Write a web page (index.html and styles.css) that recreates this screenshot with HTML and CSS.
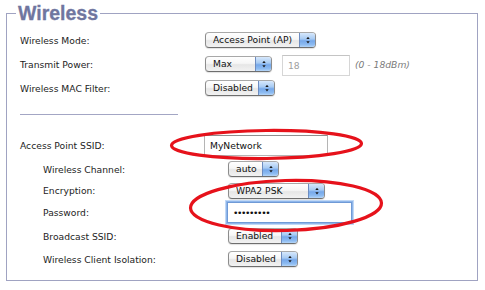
FILE: index.html
```
<!DOCTYPE html>
<html>
<head>
<meta charset="utf-8">
<title>Wireless</title>
<link rel="stylesheet" href="styles.css">
</head>
<body>
<form class="page">
  <fieldset class="panel">
    <legend class="panel-title">Wireless</legend>

    <div class="grid grid-main">
      <label class="lbl">Wireless Mode:</label>
      <div class="ctl">
        <span class="sel w-ap"><select><option>Access Point (AP)</option></select><span class="sel-btn"><svg viewBox="0 0 14 14" width="14" height="14"><polygon points="5.3,6 7,3.8 8.7,6"/><polygon points="5.3,8.3 7,10.5 8.7,8.3"/></svg></span></span>
      </div>

      <label class="lbl">Transmit Power:</label>
      <div class="ctl">
        <span class="sel w-max"><select><option>Max</option></select><span class="sel-btn"><svg viewBox="0 0 14 14" width="14" height="14"><polygon points="5.3,6 7,3.8 8.7,6"/><polygon points="5.3,8.3 7,10.5 8.7,8.3"/></svg></span></span>
        <input class="txt txt-power" type="text" value="18" disabled>
        <span class="hint">(0 - 18dBm)</span>
      </div>

      <label class="lbl">Wireless MAC Filter:</label>
      <div class="ctl">
        <span class="sel w-dis"><select><option>Disabled</option></select><span class="sel-btn"><svg viewBox="0 0 14 14" width="14" height="14"><polygon points="5.3,6 7,3.8 8.7,6"/><polygon points="5.3,8.3 7,10.5 8.7,8.3"/></svg></span></span>
      </div>
    </div>

    <hr class="divider">

    <div class="grid grid-ssid">
      <label class="lbl">Access Point SSID:</label>
      <div class="ctl">
        <input class="txt txt-ssid" type="text" value="MyNetwork">
      </div>
    </div>

    <div class="grid grid-sub">
      <label class="lbl">Wireless Channel:</label>
      <div class="ctl">
        <span class="sel w-auto"><select><option>auto</option></select><span class="sel-btn"><svg viewBox="0 0 14 14" width="14" height="14"><polygon points="5.3,6 7,3.8 8.7,6"/><polygon points="5.3,8.3 7,10.5 8.7,8.3"/></svg></span></span>
      </div>

      <label class="lbl">Encryption:</label>
      <div class="ctl">
        <span class="sel w-wpa"><select><option>WPA2 PSK</option></select><span class="sel-btn"><svg viewBox="0 0 14 14" width="14" height="14"><polygon points="5.3,6 7,3.8 8.7,6"/><polygon points="5.3,8.3 7,10.5 8.7,8.3"/></svg></span></span>
      </div>

      <label class="lbl">Password:</label>
      <div class="ctl">
        <input class="txt txt-pwd" type="password" value="password1">
      </div>

      <label class="lbl">Broadcast SSID:</label>
      <div class="ctl">
        <span class="sel w-en"><select><option>Enabled</option></select><span class="sel-btn"><svg viewBox="0 0 14 14" width="14" height="14"><polygon points="5.3,6 7,3.8 8.7,6"/><polygon points="5.3,8.3 7,10.5 8.7,8.3"/></svg></span></span>
      </div>

      <label class="lbl">Wireless Client Isolation:</label>
      <div class="ctl">
        <span class="sel w-en"><select><option>Disabled</option></select><span class="sel-btn"><svg viewBox="0 0 14 14" width="14" height="14"><polygon points="5.3,6 7,3.8 8.7,6"/><polygon points="5.3,8.3 7,10.5 8.7,8.3"/></svg></span></span>
      </div>
    </div>
  </fieldset>

  <svg class="marks" viewBox="0 0 485 290" width="485" height="290" aria-hidden="true">
    <ellipse cx="266.5" cy="144.5" rx="95" ry="14" transform="rotate(-0.6 266.5 144.5)"/>
    <ellipse cx="286" cy="205.5" rx="95.5" ry="25" transform="rotate(-1.5 286 205.5)"/>
  </svg>
</form>
</body>
</html>
```
FILE: styles.css
```
* { box-sizing: border-box; }

html, body {
  margin: 0;
  padding: 0;
  background: #ffffff;
}

.page {
  position: relative;
  width: 485px;
  height: 290px;
  padding: 3px 0 0 6px;
  font-family: "DejaVu Sans", Verdana, sans-serif;
  font-size: 9.2px;
  color: #1d1d1d;
}

.panel {
  width: 472px;
  margin: 0;
  padding: 5px 0 10px 13px;
  border: 1px solid #a0a3c2;
}

.panel-title {
  margin-left: -4px;
  padding: 0 2px;
  font-family: "Liberation Sans", Arial, sans-serif;
  font-weight: bold;
  font-size: 19.5px;
  line-height: 20px;
  color: #70769f;
  -webkit-text-stroke: 0.3px #70769f;
}

.grid {
  display: grid;
  grid-template-columns: 185px 1fr;
  align-items: center;
}

.grid-main {
  grid-auto-rows: 24px;
}

.grid-ssid {
  grid-template-rows: 22px;
  margin-top: 19px;
}

.grid-sub {
  padding-left: 23px;
  margin-top: 2px;
  grid-template-rows: 22px 21px 23px 24px 22px;
}

.lbl {
  white-space: nowrap;
}

.ctl {
  display: flex;
  align-items: center;
}

.divider {
  width: 158px;
  margin: 14px 0 0 0;
  border: 0;
  border-top: 1px solid #a3a6c4;
  height: 0;
}

/* Aqua style popup menu */
.sel {
  display: inline-flex;
  height: 16px;
  border: 1px solid #8c8c8c;
  border-top-color: #a8a8a8;
  border-bottom-color: #6e6e6e;
  border-radius: 4px;
  overflow: hidden;
  background: linear-gradient(#ffffff 0%, #f6f6f6 45%, #e6e6e6 55%, #f2f2f2 100%);
  box-shadow: 0 1px 1px rgba(0, 0, 0, 0.12);
}

.sel select {
  flex: 1;
  min-width: 0;
  -webkit-appearance: none;
  appearance: none;
  border: 0;
  margin: 0;
  padding: 0 0 0 7px;
  background: transparent;
  font-family: inherit;
  font-size: 9.2px;
  color: #111;
  height: 14px;
  line-height: 14px;
  outline: none;
}

.sel-btn {
  flex: none;
  width: 16px;
  display: flex;
  align-items: center;
  justify-content: center;
  border-left: 1px solid #6d8cc0;
  background: linear-gradient(#d7e8fc 0%, #a8cbf3 42%, #76a8ea 56%, #8fbdf2 85%, #b6d6f8 100%);
}

.sel-btn svg {
  display: block;
  fill: #1a1a1a;
}

.w-ap { width: 111px; }
.w-max { width: 67px; }
.w-dis { width: 70px; }
.w-auto { width: 51px; }
.w-wpa { width: 97px; }
.w-en { width: 70px; }

/* text fields */
.txt {
  font-family: inherit;
  font-size: 9.2px;
  margin: 0;
  border: 1px solid #b5b5b5;
  border-top-color: #8e8e8e;
  background: #fff;
  color: #111;
  padding: 0 5px;
  outline: none;
}

.txt-power {
  width: 68px;
  height: 21px;
  margin-left: 10px;
  color: #a0a0a0;
  border-color: #d6d6d6;
  border-top-color: #c4c4c4;
  margin-top: 2px;
}

.hint {
  margin-left: 5px;
  font-style: italic;
  color: #7a7a7a;
}

.txt-ssid {
  width: 124px;
  height: 21px;
  margin-left: -1px;
}

.txt-pwd {
  width: 125px;
  height: 21px;
  margin-left: -1px;
  letter-spacing: -1.4px;
  border-color: #6f9ad6;
  box-shadow: 0 0 0 1px #8fb6ea, 0 0 0 2px #c0d8f6;
}

/* annotation overlay */
.marks {
  position: absolute;
  left: 0;
  top: 0;
  pointer-events: none;
}

.marks ellipse {
  fill: none;
  stroke: #e6121b;
  stroke-width: 3.2;
}
```
